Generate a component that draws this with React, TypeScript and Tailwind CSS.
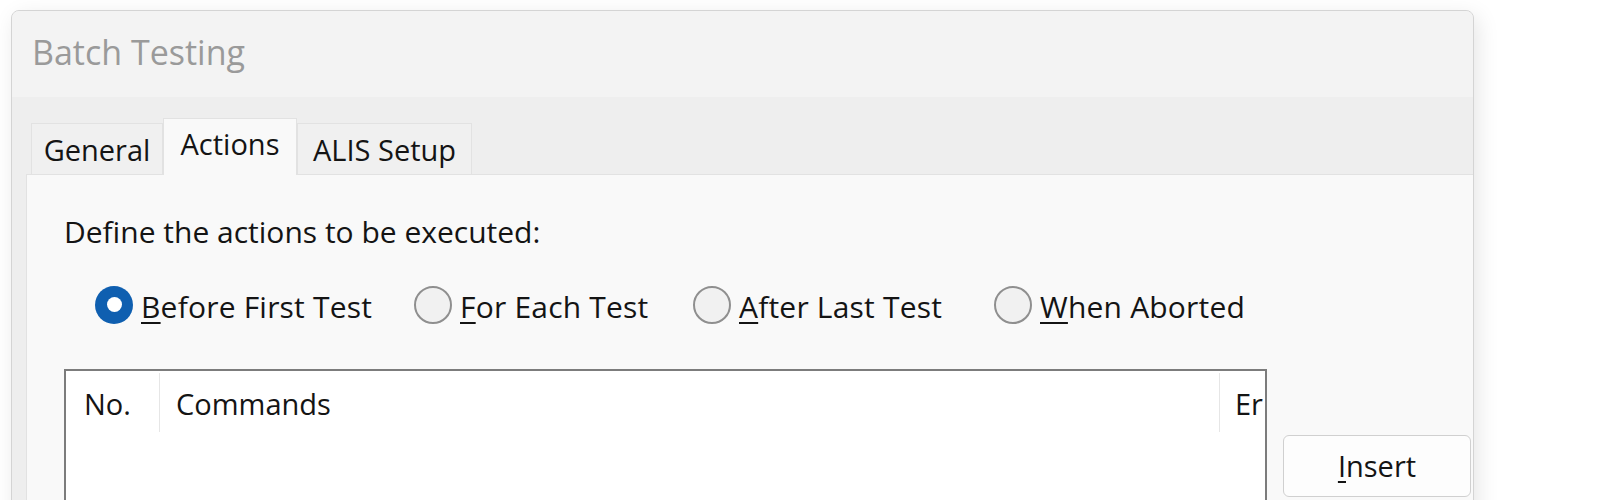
import React from 'react';

const font = "font-['Open_Sans','Noto_Sans',sans-serif]";

type RadioProps = { label: string; accel: string; checked?: boolean; width?: string };

const Radio: React.FC<RadioProps> = ({ label, accel, checked, width }) => {
  const rest = label.slice(accel.length);
  return (
    <div className={`flex h-[40px] items-center ${width ?? ''}`}>
      {checked ? (
        <span className="mb-[5px] flex h-[38px] w-[38px] shrink-0 items-center justify-center rounded-full bg-[#0f5fb0]">
          <span className="h-[15px] w-[15px] rounded-full bg-white" />
        </span>
      ) : (
        <span className="mb-[5px] h-[38px] w-[38px] shrink-0 rounded-full border-2 border-[#8f8f8f] bg-[#f1f1f1]" />
      )}
      <span className="ml-[8px] whitespace-nowrap text-[30px] tracking-[0.2px]">
        <u className="decoration-2 underline-offset-[4px]">{accel}</u>
        {rest}
      </span>
    </div>
  );
};

const App: React.FC = () => {
  return (
    <div className={`h-[500px] overflow-hidden bg-white ${font} text-[29px] leading-[40px] text-[#141414]`}>
      <div className="ml-[11px] mt-[10px] h-[560px] w-[1463px] overflow-hidden rounded-t-[8px] border border-[#d4d4d4] bg-[#eeeeee] shadow-[4px_6px_22px_rgba(0,0,0,0.10)]">
        {/* title bar */}
        <div className="h-[86px] bg-[#f3f3f3] pl-[20px] pt-[17px] text-[34px] leading-[48px] text-[#9a9a9a]">
          Batch Testing
        </div>

        {/* tab strip */}
        <div className="flex h-[77px] items-end pl-[19px]">
          <div className="h-[51px] w-[132px] border border-b-0 border-[#e2e2e2] bg-[#f0f0f0] pt-[6px] text-center">
            General
          </div>
          <div className="relative z-10 -mb-px h-[57px] w-[134px] border border-b-0 border-[#e2e2e2] bg-[#f9f9f9] pt-[5px] text-center">
            Actions
          </div>
          <div className="h-[51px] w-[175px] border border-b-0 border-[#e2e2e2] bg-[#f0f0f0] pt-[6px] text-center">
            ALIS Setup
          </div>
        </div>

        {/* tab panel */}
        <div className="ml-[14px] h-[400px] border-l border-t border-[#e2e2e2] bg-[#f9f9f9] pl-[37px] pt-[37px]">
          <div className="text-[30px]">Define the actions to be executed:</div>

          <div className="ml-[31px] mt-[35px] flex">
            <Radio label="Before First Test" accel="B" checked width="w-[319px]" />
            <Radio label="For Each Test" accel="F" width="w-[279px]" />
            <Radio label="After Last Test" accel="A" width="w-[301px]" />
            <Radio label="When Aborted" accel="W" />
          </div>

          <div className="mt-[42px] flex items-start">
            <div className="h-[200px] w-[1203px] border-2 border-[#7c7c7c] bg-white">
              <div className="flex h-[61px]">
                <div className="w-[93px] pl-[18px] pt-[13px]">No.</div>
                <div className="mt-[2px] h-[59px] w-px bg-[#e6e6e6]" />
                <div className="w-[1059px] pl-[16px] pt-[13px]">Commands</div>
                <div className="mt-[2px] h-[59px] w-px bg-[#e6e6e6]" />
                <div className="flex-1 whitespace-nowrap pl-[15px] pt-[13px]">Er</div>
              </div>
            </div>

            <button className="ml-[16px] mt-[66px] flex h-[62px] w-[188px] items-center justify-center rounded-[6px] border border-[#d0d0d0] bg-[#fdfdfd]">
              <span>
                <u className="decoration-2 underline-offset-[4px]">I</u>nsert
              </span>
            </button>
          </div>
        </div>
      </div>
    </div>
  );
};

export default App;
